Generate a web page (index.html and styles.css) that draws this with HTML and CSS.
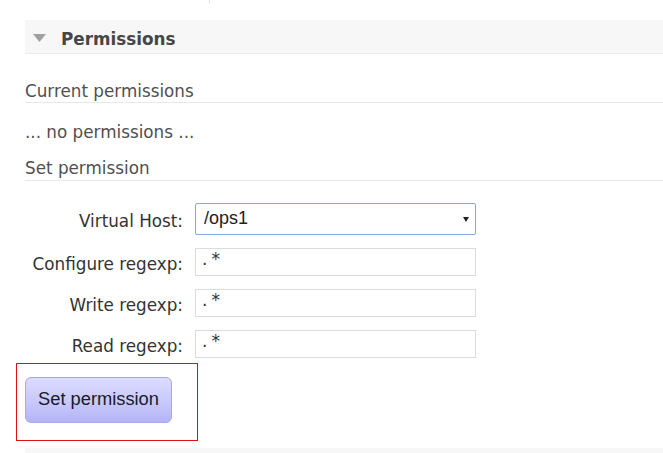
FILE: index.html
```html
<!DOCTYPE html>
<html>
<head>
<meta charset="utf-8">
<link rel="stylesheet" href="styles.css">
</head>
<body>
<div class="tick"></div>
<div class="section">
  <div class="section-head">
    <svg class="tri" width="13" height="8" viewBox="0 0 13 8"><polygon points="0,0 13,0 6.5,8" fill="#a0a0a0"/></svg>
    <span class="section-title">Permissions</span>
  </div>
  <h3 class="sub first">Current permissions</h3>
  <p class="empty">... no permissions ...</p>
  <h3 class="sub second">Set permission</h3>
  <form class="form">
    <label class="lbl">Virtual Host:</label>
    <div class="select-wrap">
      <select class="select"><option>/ops1</option></select>
      <span class="caret"></span>
    </div>
    <label class="lbl">Configure regexp:</label>
    <input class="inp" type="text" value=".*">
    <label class="lbl">Write regexp:</label>
    <input class="inp" type="text" value=".*">
    <label class="lbl">Read regexp:</label>
    <input class="inp" type="text" value=".*">
  </form>
  <div class="btn-row">
    <button class="btn" type="button">Set permission</button>
    <div class="highlight"></div>
  </div>
  <div class="next-head"></div>
</div>
</body>
</html>
```
FILE: styles.css
```css
html, body {
  margin: 0;
  padding: 0;
  background: #fff;
}
body {
  font-family: "DejaVu Sans", Verdana, sans-serif;
  color: #444;
  width: 663px;
  height: 453px;
  overflow: hidden;
}
.tick {
  margin-left: 209px;
  width: 1px;
  height: 4px;
  background: #e4e4e4;
}
.section {
  margin-top: 16px;
  margin-left: 25px;
}
.section-head {
  height: 33px;
  background: #f7f7f7;
  border-bottom: 1px solid #ececec;
  display: flex;
  align-items: center;
  padding-left: 8px;
}
.tri {
  display: block;
  margin-top: 2px;
}
.section-title {
  margin-left: 15px;
  padding-top: 4px;
  font-weight: bold;
  font-size: 16.8px;
  color: #464646;
}
.sub {
  margin: 0;
  font-weight: normal;
  font-size: 16.8px;
  line-height: 20px;
  color: #505050;
  border-bottom: 1px solid #e8e8e8;
}
.sub.first {
  margin-top: 27px;
  padding-bottom: 1px;
}
.sub.second {
  margin-top: 16px;
  padding-bottom: 2px;
}
.empty {
  margin: 19px 0 0;
  font-size: 16.8px;
  line-height: 20px;
  color: #505050;
}
.form {
  margin-top: 22px;
  display: grid;
  grid-template-columns: 158px 281px;
  column-gap: 12px;
  row-gap: 13px;
  align-items: center;
}
.lbl {
  text-align: right;
  font-size: 16.8px;
  color: #333;
  padding-top: 4px;
}
.select-wrap {
  position: relative;
  height: 32px;
}
.select {
  appearance: none;
  -webkit-appearance: none;
  width: 100%;
  height: 32px;
  box-sizing: border-box;
  border: 1px solid #86a8d8;
  border-radius: 2px;
  background: #fff;
  font-family: "Liberation Sans", Arial, sans-serif;
  font-size: 18px;
  color: #222;
  padding: 0 0 3px 8px;
  margin: 0;
  outline: none;
}
.caret {
  position: absolute;
  right: 7px;
  top: 14px;
  width: 0;
  height: 0;
  border-left: 3px solid transparent;
  border-right: 3px solid transparent;
  border-top: 5px solid #222;
  pointer-events: none;
}
.inp {
  width: 100%;
  height: 28px;
  box-sizing: border-box;
  border: 1px solid #dcdcdc;
  border-radius: 0;
  background: #fff;
  font-family: "DejaVu Sans", Verdana, sans-serif;
  font-size: 17px;
  letter-spacing: 4px;
  color: #333;
  padding: 0 0 6px 6px;
  margin: 0;
  outline: none;
}
.btn-row {
  position: relative;
  margin-top: 19px;
  height: 46px;
}
.btn {
  display: block;
  width: 147px;
  height: 46px;
  box-sizing: border-box;
  border: 1px solid #a6a6ea;
  border-radius: 6px;
  background: linear-gradient(to bottom, #dcdcff 0%, #c8c8fc 55%, #b4b4f6 100%);
  font-family: "Liberation Sans", Arial, sans-serif;
  font-size: 18.3px;
  color: #1a1a2a;
  padding: 0 0 2px;
  margin: 0;
}
.highlight {
  position: absolute;
  left: -9px;
  top: -14px;
  width: 182px;
  height: 78px;
  box-sizing: border-box;
  border: 1px solid #e01010;
  pointer-events: none;
}
.next-head {
  margin-top: 25px;
  height: 20px;
  background: #f7f7f7;
}
```
